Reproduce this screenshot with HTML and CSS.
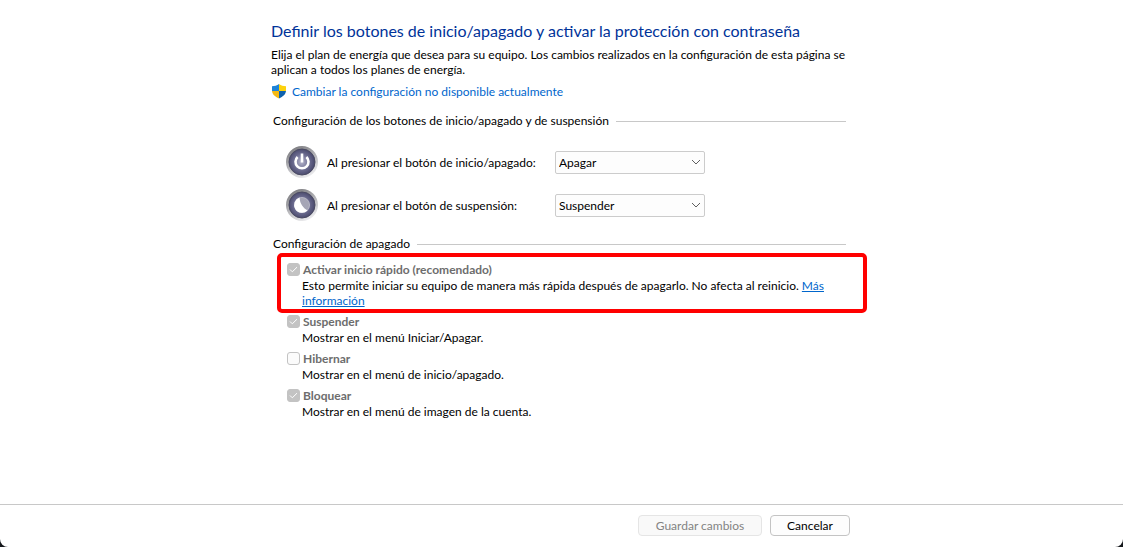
FILE: index.html
```html
<!DOCTYPE html>
<html lang="es">
<head>
    <meta charset="UTF-8">
    <meta name="viewport" content="width=device-width, initial-scale=1.0">
    <title>Opciones de energía</title>
    <link rel="stylesheet" href="styles.css">
</head>
<body>
    <div class="window">
        <main class="content">
            <h1>Definir los botones de inicio/apagado y activar la protección con contraseña</h1>
            <p class="intro">Elija el plan de energía que desea para su equipo. Los cambios realizados en la configuración de esta página se aplican a todos los planes de energía.</p>
            <a href="#" class="admin-link">
                <svg class="shield" viewBox="0 0 16 16">
                    <clipPath id="shield-shape">
                        <path d="M8 1 C6 2.6 3.6 3.2 1 3.2 V7.5 C1 11.2 4 13.6 8 15.4 C12 13.6 15 11.2 15 7.5 V3.2 C12.4 3.2 10 2.6 8 1 Z"/>
                    </clipPath>
                    <g clip-path="url(#shield-shape)">
                        <rect width="8" height="8" fill="#1e83d8"/>
                        <rect x="8" width="8" height="8" fill="#fdd20d"/>
                        <rect y="8" width="8" height="8" fill="#f5b813"/>
                        <rect x="8" y="8" width="8" height="8" fill="#0f62ad"/>
                    </g>
                </svg>
                <span>Cambiar la configuración no disponible actualmente</span>
            </a>

            <section class="buttons-section">
                <h2>Configuración de los botones de inicio/apagado y de suspensión</h2>
                <div class="setting">
                    <svg class="round-icon" viewBox="0 0 34 34">
                        <defs>
                            <linearGradient id="ring" x1="0.2" y1="0" x2="0.7" y2="1">
                                <stop offset="0" stop-color="#77777b"/>
                                <stop offset="0.5" stop-color="#b4b4b8"/>
                                <stop offset="1" stop-color="#f0f0f2"/>
                            </linearGradient>
                            <radialGradient id="face" cx="0.48" cy="0.5" r="0.55">
                                <stop offset="0" stop-color="#b4b4ca"/>
                                <stop offset="0.55" stop-color="#6c6c90"/>
                                <stop offset="1" stop-color="#434366"/>
                            </radialGradient>
                        </defs>
                        <circle cx="17" cy="17" r="16" fill="url(#ring)"/>
                        <circle cx="17" cy="17" r="13" fill="url(#face)" stroke="#4a4a62"/>
                        <path d="M12.6 12 A6.5 6.5 0 1 0 21.4 12" fill="none" stroke="#fff" stroke-width="2.6"/>
                        <path d="M17 8.5 V17.5" stroke="#fff" stroke-width="2.6"/>
                    </svg>
                    <label for="power-button">Al presionar el botón de inicio/apagado:</label>
                    <select id="power-button">
                        <option>Apagar</option>
                        <option>Suspender</option>
                        <option>No hacer nada</option>
                    </select>
                </div>
                <div class="setting">
                    <svg class="round-icon" viewBox="0 0 34 34">
                        <circle cx="17" cy="17" r="16" fill="url(#ring)"/>
                        <circle cx="17" cy="17" r="13" fill="url(#face)" stroke="#4a4a62"/>
                        <circle cx="17" cy="17" r="7.6" fill="#a6a6b6" stroke="#d0d0da" stroke-width="0.6"/>
                        <path d="M14.6 9.6 A7.8 7.8 0 1 0 22.6 22.4 C18.5 20.5 14.8 16 14.6 9.6 Z" fill="#fff"/>
                    </svg>
                    <label for="sleep-button">Al presionar el botón de suspensión:</label>
                    <select id="sleep-button">
                        <option>Suspender</option>
                        <option>Apagar</option>
                        <option>No hacer nada</option>
                    </select>
                </div>
            </section>

            <section class="shutdown-section">
                <h2>Configuración de apagado</h2>
                <div class="option highlighted">
                    <div class="option-title">
                        <input type="checkbox" id="fast-startup" checked disabled>
                        <label for="fast-startup">Activar inicio rápido (recomendado)</label>
                    </div>
                    <p>Esto permite iniciar su equipo de manera más rápida después de apagarlo. No afecta al reinicio. <a href="#">Más información</a></p>
                </div>
                <div class="option">
                    <div class="option-title">
                        <input type="checkbox" id="sleep" checked disabled>
                        <label for="sleep">Suspender</label>
                    </div>
                    <p>Mostrar en el menú Iniciar/Apagar.</p>
                </div>
                <div class="option">
                    <div class="option-title">
                        <input type="checkbox" id="hibernate" disabled>
                        <label for="hibernate">Hibernar</label>
                    </div>
                    <p>Mostrar en el menú de inicio/apagado.</p>
                </div>
                <div class="option">
                    <div class="option-title">
                        <input type="checkbox" id="lock" checked disabled>
                        <label for="lock">Bloquear</label>
                    </div>
                    <p>Mostrar en el menú de imagen de la cuenta.</p>
                </div>
            </section>
        </main>

        <footer>
            <div class="actions">
                <button type="button" class="save" disabled>Guardar cambios</button>
                <button type="button" class="cancel">Cancelar</button>
            </div>
        </footer>
    </div>
</body>
</html>
```
FILE: styles.css
```css
* {
    box-sizing: border-box;
}

body {
    margin: 0;
    background-color: #15181c;
    font-family: Lato, "Open Sans", sans-serif;
    font-size: 12px;
    line-height: 15px;
    color: #000;
}

.window {
    display: flex;
    flex-direction: column;
    min-height: 100vh;
    background-color: #fff;
    border-radius: 0 0 8px 8px;
}

.content {
    flex: 1;
    width: 100%;
    max-width: 581px;
    margin: 0 auto;
    padding-top: 19px;
}

h1 {
    margin: 0 0 4px;
    font-size: 16px;
    font-weight: normal;
    line-height: 24px;
    color: #003399;
    white-space: nowrap;
}

p {
    margin: 0;
}

a {
    color: #0066cc;
}

.admin-link {
    display: flex;
    align-items: center;
    gap: 5px;
    margin-top: 6px;
    text-decoration: none;
}

.shield {
    width: 16px;
    height: 16px;
}

/* Section titles with the line on the right */
h2 {
    display: flex;
    align-items: center;
    gap: 7px;
    margin: 0;
    padding: 0 6px 0 2px;
    font-size: 12px;
    font-weight: normal;
    line-height: 16px;
}

h2::after {
    content: "";
    flex: 1;
    height: 1px;
    background-color: #c8c8c8;
}

.buttons-section {
    margin-top: 14px;
}

.setting {
    display: grid;
    grid-template-columns: 34px 220px 150px;
    align-items: center;
    column-gap: 8px;
    margin: 9px 0 0 14px;
}

.buttons-section h2 {
    margin-bottom: 16px;
}

.round-icon {
    width: 34px;
    height: 34px;
}

.setting label {
    white-space: nowrap;
}

select {
    appearance: none;
    height: 23px;
    padding: 0 20px 0 3px;
    border: 1px solid #ccc;
    border-radius: 2px;
    background: #fdfdfd url("data:image/svg+xml,%3Csvg xmlns='http://www.w3.org/2000/svg' width='10' height='6'%3E%3Cpath d='M1 1l4 4 4-4' fill='none' stroke='%23606060'/%3E%3C/svg%3E") no-repeat right 3px center;
    font: inherit;
    color: #000;
}

.shutdown-section {
    margin-top: 14px;
}

.shutdown-section h2 {
    margin-bottom: 8px;
}

.option {
    position: relative;
    margin: 0 0 4px 16px;
}

.option-title {
    display: flex;
    align-items: center;
    gap: 3px;
    height: 18px;
    font-weight: bold;
    color: #6d6d6d;
}

.option p {
    padding-left: 15px;
}

.highlighted::after {
    content: "";
    position: absolute;
    inset: -7px -15px -5px -10px;
    border: 4px solid #ff0000;
    border-radius: 5px;
    pointer-events: none;
}

input[type="checkbox"] {
    appearance: none;
    width: 13px;
    height: 13px;
    margin: 0;
    border: 1px solid #c3c3c3;
    border-radius: 3px;
    background: #fbfbfb;
}

input[type="checkbox"]:checked {
    background: #c3c3c3 url("data:image/svg+xml,%3Csvg xmlns='http://www.w3.org/2000/svg' width='9' height='7'%3E%3Cpath d='M1 3.5l2.3 2.3L8 1.2' fill='none' stroke='%23fff'/%3E%3C/svg%3E") no-repeat center;
}

footer {
    border-top: 1px solid #c8c8c8;
    padding: 10px 0 11px;
}

.actions {
    display: flex;
    justify-content: flex-end;
    gap: 8px;
    width: 100%;
    max-width: 581px;
    margin: 0 auto;
    padding-right: 2px;
}

button {
    height: 21px;
    padding: 0;
    border: 1px solid #c4c4c4;
    border-radius: 4px;
    background-color: #fdfdfd;
    font: inherit;
    color: #000;
}

.save {
    width: 124px;
    border-color: #e5e5e5;
    background-color: #f9f9f9;
    color: #838383;
}

.cancel {
    width: 80px;
}
```
